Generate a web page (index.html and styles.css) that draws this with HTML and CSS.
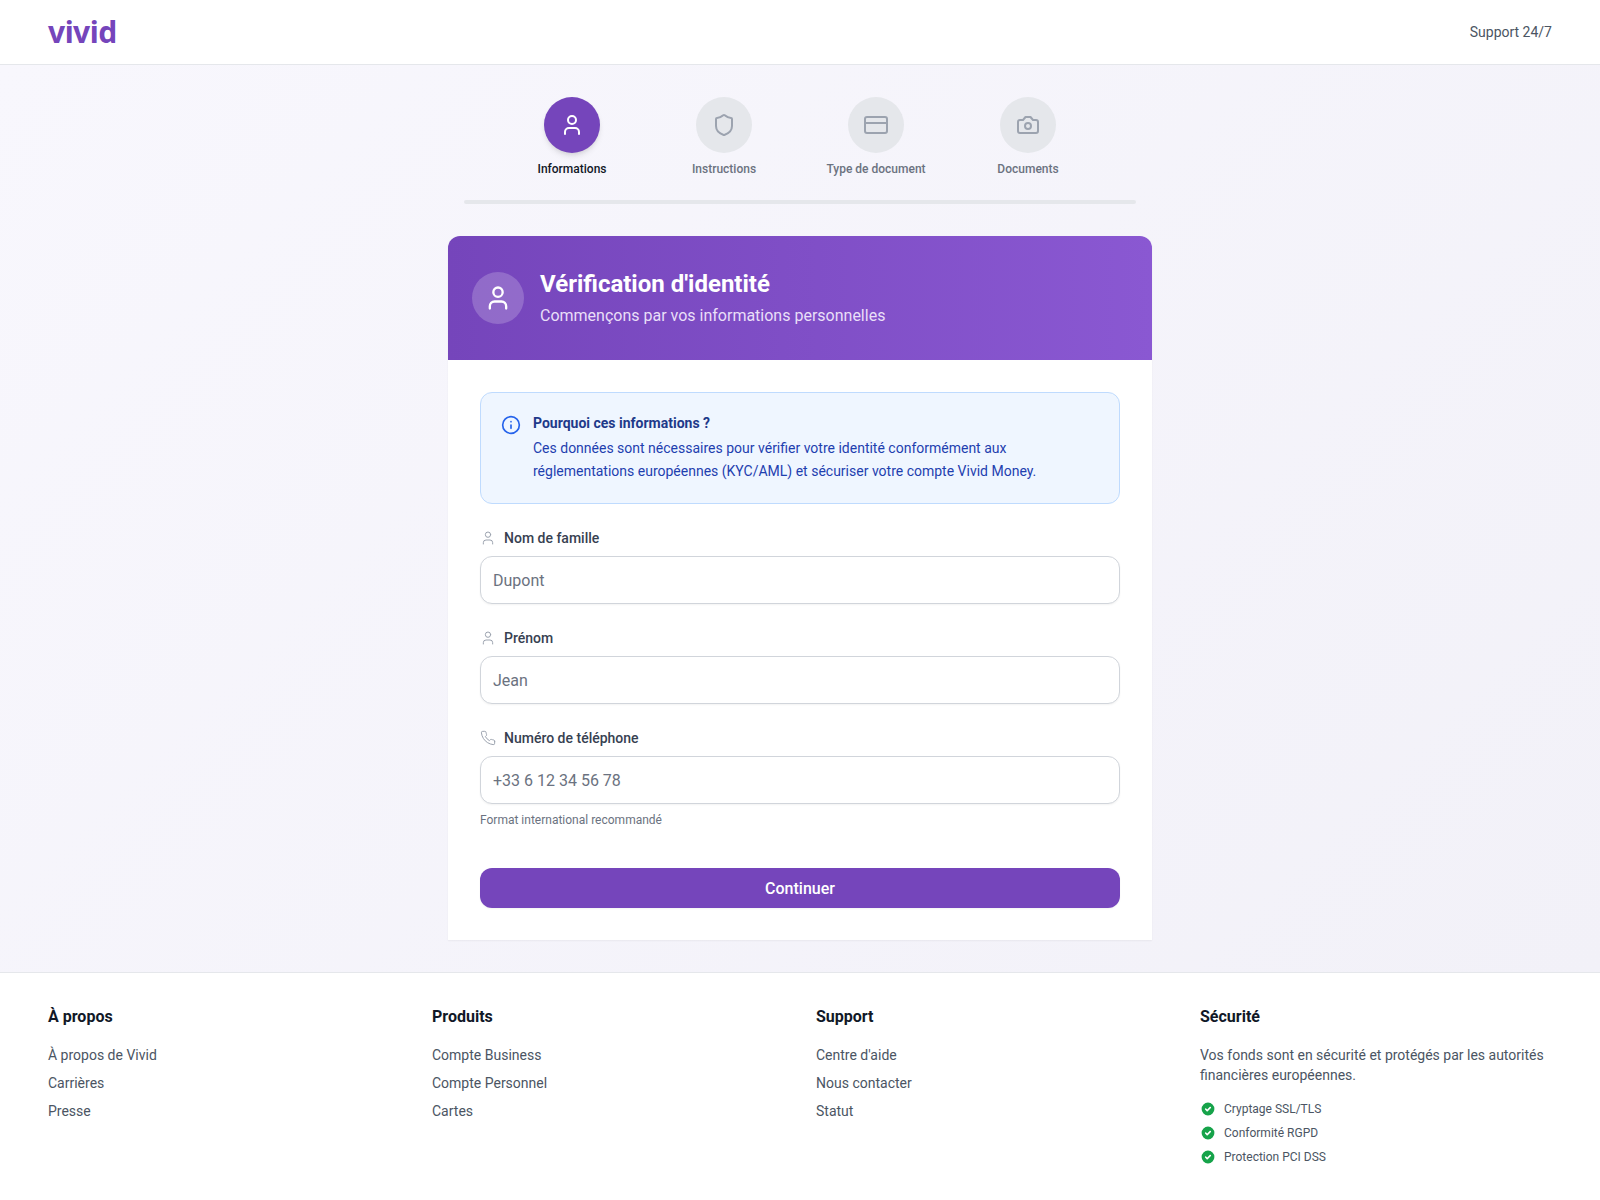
FILE: index.html
```html
<!DOCTYPE html>
<html lang="fr">
<head>
<meta charset="utf-8">
<title>Vivid</title>
<link rel="stylesheet" href="styles.css">
</head>
<body>
<svg class="defs" width="0" height="0" aria-hidden="true">
  <symbol id="user" viewBox="0 0 24 24"><path d="M19 21v-2a4 4 0 0 0-4-4H9a4 4 0 0 0-4 4v2"/><circle cx="12" cy="7" r="4"/></symbol>
  <symbol id="phone" viewBox="0 0 24 24"><path d="M22 16.92v3a2 2 0 0 1-2.18 2 19.79 19.79 0 0 1-8.63-3.07 19.5 19.5 0 0 1-6-6 19.79 19.79 0 0 1-3.07-8.67A2 2 0 0 1 4.11 2h3a2 2 0 0 1 2 1.72 12.84 12.84 0 0 0 .7 2.81 2 2 0 0 1-.45 2.11L8.09 9.91a16 16 0 0 0 6 6l1.27-1.27a2 2 0 0 1 2.11-.45 12.84 12.84 0 0 0 2.81.7A2 2 0 0 1 22 16.92z"/></symbol>
  <symbol id="check" viewBox="0 0 20 20"><path fill-rule="evenodd" clip-rule="evenodd" d="M10 18a8 8 0 1 0 0-16 8 8 0 0 0 0 16zm3.7-9.3a1 1 0 0 0-1.4-1.4L9 10.6 7.7 9.3a1 1 0 0 0-1.4 1.4l2 2a1 1 0 0 0 1.4 0l4-4z"/></symbol>
</svg>
<header class="topbar">
  <div class="logo">vivid</div>
  <div class="support">Support 24/7</div>
</header>
<main class="main">
  <div class="stepper">
    <div class="steps">
      <div class="step step-active">
        <div class="step-circle"><svg class="ico ico-24"><use href="#user"/></svg></div>
        <div class="step-label">Informations</div>
      </div>
      <div class="step">
        <div class="step-circle"><svg class="ico ico-24" viewBox="0 0 24 24"><path d="M20 13c0 5-3.5 7.5-7.66 8.95a1 1 0 0 1-.67-.01C7.5 20.5 4 18 4 13V6a1 1 0 0 1 1-1c2 0 4.5-1.2 6.24-2.72a1.17 1.17 0 0 1 1.52 0C14.51 3.81 17 5 19 5a1 1 0 0 1 1 1z"/></svg></div>
        <div class="step-label">Instructions</div>
      </div>
      <div class="step">
        <div class="step-circle"><svg class="ico ico-24" viewBox="0 0 24 24"><rect x="1" y="4" width="22" height="16" rx="2"/><line x1="1" y1="10" x2="23" y2="10"/></svg></div>
        <div class="step-label">Type de document</div>
      </div>
      <div class="step">
        <div class="step-circle"><svg class="ico ico-24" viewBox="0 0 24 24"><path d="M14.5 4h-5L7 7H4a2 2 0 0 0-2 2v9a2 2 0 0 0 2 2h16a2 2 0 0 0 2-2V9a2 2 0 0 0-2-2h-3z"/><circle cx="12" cy="13" r="3"/></svg></div>
        <div class="step-label">Documents</div>
      </div>
    </div>
    <div class="progress"></div>
  </div>
  <section class="card">
    <div class="card-head">
      <div class="head-icon"><svg class="ico ico-28"><use href="#user"/></svg></div>
      <div>
        <h1 class="head-title">Vérification d'identité</h1>
        <p class="head-sub">Commençons par vos informations personnelles</p>
      </div>
    </div>
    <form class="card-body">
      <div class="notice">
        <svg class="ico notice-icon" viewBox="0 0 24 24"><circle cx="12" cy="12" r="10"/><path d="M12 16v-4"/><path d="M12 8h.01"/></svg>
        <div>
          <div class="notice-title">Pourquoi ces informations ?</div>
          <p class="notice-text">Ces données sont nécessaires pour vérifier votre identité conformément aux réglementations européennes (KYC/AML) et sécuriser votre compte Vivid Money.</p>
        </div>
      </div>
      <div class="field">
        <label class="field-label"><svg class="ico ico-16"><use href="#user"/></svg>Nom de famille</label>
        <input class="input" placeholder="Dupont">
      </div>
      <div class="field">
        <label class="field-label"><svg class="ico ico-16"><use href="#user"/></svg>Prénom</label>
        <input class="input" placeholder="Jean">
      </div>
      <div class="field">
        <label class="field-label"><svg class="ico ico-16"><use href="#phone"/></svg>Numéro de téléphone</label>
        <input class="input" placeholder="+33 6 12 34 56 78">
        <div class="hint">Format international recommandé</div>
      </div>
      <button type="button" class="submit">Continuer</button>
    </form>
  </section>
</main>
<footer class="footer">
  <div class="foot-col">
    <h3 class="foot-title">À propos</h3>
    <ul class="foot-links"><li>À propos de Vivid</li><li>Carrières</li><li>Presse</li></ul>
  </div>
  <div class="foot-col">
    <h3 class="foot-title">Produits</h3>
    <ul class="foot-links"><li>Compte Business</li><li>Compte Personnel</li><li>Cartes</li></ul>
  </div>
  <div class="foot-col">
    <h3 class="foot-title">Support</h3>
    <ul class="foot-links"><li>Centre d'aide</li><li>Nous contacter</li><li>Statut</li></ul>
  </div>
  <div class="foot-col">
    <h3 class="foot-title">Sécurité</h3>
    <p class="foot-text">Vos fonds sont en sécurité et protégés par les autorités financières européennes.</p>
    <ul class="badges">
      <li class="badge"><svg class="badge-icon"><use href="#check"/></svg>Cryptage SSL/TLS</li>
      <li class="badge"><svg class="badge-icon"><use href="#check"/></svg>Conformité RGPD</li>
      <li class="badge"><svg class="badge-icon"><use href="#check"/></svg>Protection PCI DSS</li>
    </ul>
  </div>
</footer>
</body>
</html>
```
FILE: styles.css
```css
* { box-sizing: border-box; }
html, body { margin: 0; padding: 0; }
body {
  font-family: Roboto, "Liberation Sans", sans-serif;
  color: #111827;
  background: #fff;
}
.defs { position: absolute; }
.ico {
  fill: none;
  stroke: currentColor;
  stroke-width: 2;
  stroke-linecap: round;
  stroke-linejoin: round;
  flex: none;
}
.ico-24 { width: 24px; height: 24px; }
.ico-28 { width: 28px; height: 28px; }
.ico-16 { width: 16px; height: 16px; stroke-width: 2; color: #9ca3af; }

.topbar {
  height: 65px;
  display: flex;
  align-items: center;
  justify-content: space-between;
  padding: 0 48px;
  background: #fff;
  border-bottom: 1px solid #e5e7eb;
}
.logo {
  font-family: "Noto Sans", sans-serif;
  font-size: 30px;
  font-weight: 700;
  color: #7545bb;
  line-height: 60px;
  letter-spacing: -0.5px;
}
.support { font-size: 14px; color: #4b5563; }

.main {
  background: linear-gradient(135deg, #f8f7fd 0%, #f2f1f8 100%);
  padding: 32px 0;
  display: flex;
  flex-direction: column;
  align-items: center;
}
.stepper { width: 672px; margin-bottom: 32px; }
.steps { display: flex; justify-content: center; }
.step {
  width: 152px;
  display: flex;
  flex-direction: column;
  align-items: center;
}
.step-circle {
  width: 56px;
  height: 56px;
  border-radius: 50%;
  background: #e5e7eb;
  color: #9ca3af;
  display: flex;
  align-items: center;
  justify-content: center;
}
.step-active .step-circle {
  background: #7545bb;
  color: #fff;
  box-shadow: 0 4px 6px -1px rgba(0,0,0,.1), 0 2px 4px -2px rgba(0,0,0,.1);
}
.step-label {
  margin-top: 8px;
  font-size: 12px;
  line-height: 16px;
  font-weight: 500;
  color: #6b7280;
}
.step-active .step-label { color: #111827; }
.progress {
  height: 4px;
  margin-top: 23px;
  border-radius: 2px;
  background: #e5e7eb;
}

.card {
  width: 704px;
  background: #fff;
  border-radius: 12px 12px 0 0;
  box-shadow: 0 1px 2px rgba(0,0,0,.05);
}
.card-head {
  height: 124px;
  padding: 0 24px;
  display: flex;
  align-items: center;
  gap: 16px;
  border-radius: 12px 12px 0 0;
  color: #fff;
  background: linear-gradient(90deg, #7545bb 0%, #8a58d2 100%);
}
.head-icon {
  width: 52px;
  height: 52px;
  border-radius: 50%;
  background: rgba(255,255,255,.2);
  display: flex;
  align-items: center;
  justify-content: center;
}
.head-title { margin: 0; font-size: 24px; line-height: 32px; font-weight: 700; }
.head-sub { margin: 4px 0 0; font-size: 16px; line-height: 24px; color: #e9dff8; }

.card-body { padding: 32px; }
.notice {
  display: flex;
  gap: 12px;
  height: 112px;
  padding: 20px;
  background: #eff6ff;
  border: 1px solid #bfdbfe;
  border-radius: 12px;
  color: #1e40af;
}
.notice-icon { width: 20px; height: 20px; margin-top: 2px; color: #2563eb; }
.notice-title { font-size: 14px; line-height: 20px; font-weight: 700; color: #1e3a8a; }
.notice-text { margin: 4px 0 0; font-size: 14px; line-height: 23px; color: #1e40af; }

.field { margin-top: 24px; }
.field + .field { margin-top: 24px; }
.field-label {
  display: flex;
  align-items: center;
  gap: 8px;
  height: 20px;
  margin-bottom: 8px;
  font-size: 14px;
  font-weight: 500;
  color: #374151;
}
.field-label .ico { stroke-width: 1.5; }
.input {
  display: block;
  width: 100%;
  height: 48px;
  padding: 0 12px;
  font: 16px Roboto, sans-serif;
  color: #111827;
  background: #fff;
  border: 1px solid #d1d5db;
  border-radius: 12px;
  outline: none;
  box-shadow: 0 1px 2px rgba(0,0,0,.05);
}
.input::placeholder { color: #6b7280; opacity: 1; }
.hint { margin-top: 8px; font-size: 12px; line-height: 16px; color: #6b7280; }
.submit {
  display: block;
  width: 100%;
  height: 40px;
  margin-top: 40px;
  border: 0;
  border-radius: 12px;
  font: 500 16px Roboto, sans-serif;
  color: #fff;
  background: #7545bb;
  box-shadow: 0 1px 2px rgba(0,0,0,.05);
}

.footer {
  display: grid;
  grid-template-columns: repeat(4, 1fr);
  gap: 32px;
  padding: 32px 48px;
  background: #fff;
  border-top: 1px solid #e5e7eb;
}
.foot-title { margin: 0 0 16px; font-size: 16px; line-height: 24px; font-weight: 700; color: #111827; }
.foot-links { list-style: none; margin: 0; padding: 0; display: flex; flex-direction: column; gap: 8px; }
.foot-links li { font-size: 14px; line-height: 20px; color: #4b5563; }
.foot-text { margin: 0 0 16px; font-size: 14px; line-height: 20px; color: #4b5563; }
.badges { list-style: none; margin: 0; padding: 0; display: flex; flex-direction: column; gap: 8px; }
.badge { display: flex; align-items: center; gap: 8px; font-size: 12px; line-height: 16px; color: #4b5563; }
.badge-icon { width: 16px; height: 16px; fill: #16a34a; flex: none; }
```
